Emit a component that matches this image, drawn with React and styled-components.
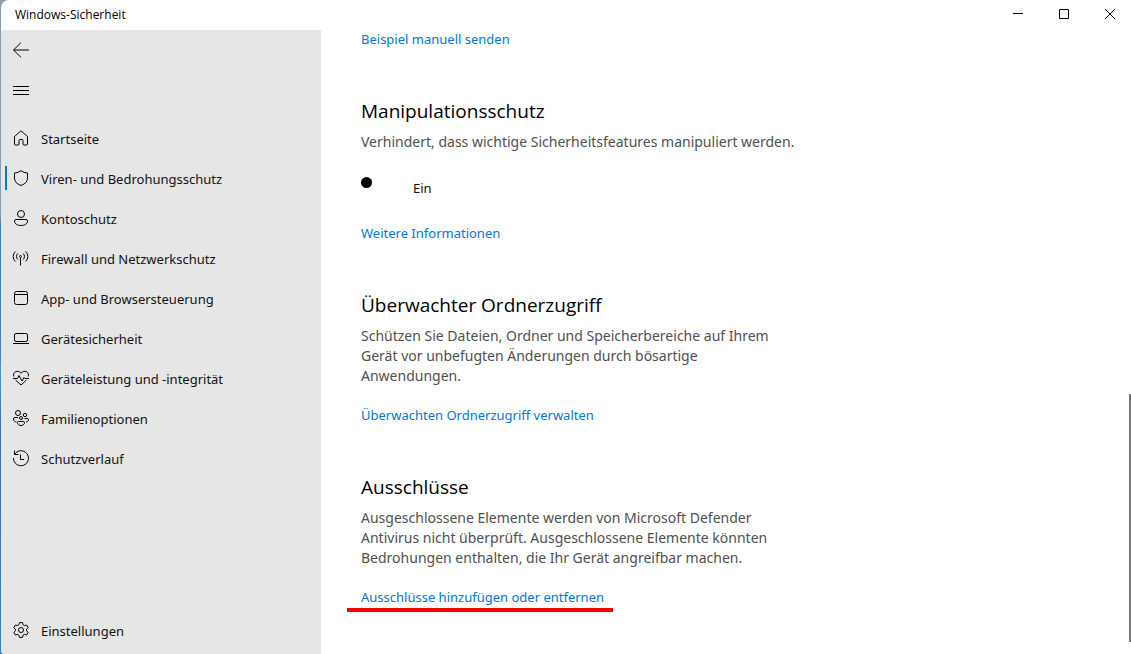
import React from "react";
import styled, { createGlobalStyle } from "styled-components";

const GlobalStyle = createGlobalStyle`
  *, *::before, *::after { box-sizing: border-box; }
  body {
    margin: 0;
    background: #ffffff;
    color: #111111;
    font-family: "Segoe UI", "Noto Sans", "Open Sans", sans-serif;
    font-size: 13px;
    line-height: 20px;
  }
  h2, p, ul { margin: 0; padding: 0; }
`;

const Desktop = styled.div`
  min-height: 100vh;
  padding-left: 1px;
  display: flex;
  background: linear-gradient(#8a9bae 0, #8a9bae 215px, #3f7fb4 225px, #4a80bb 360px, #4a9cc0 365px, #3f6cae 430px, #3f7fb4 100%);
`;

const Window = styled.div`
  flex: 1;
  min-width: 0;
  display: flex;
  flex-direction: column;
  overflow: hidden;
  background: #ffffff;
  border-radius: 8px 0 0 4px;
`;

const TitleBar = styled.header`
  height: 30px;
  padding-left: 14px;
  display: flex;
  align-items: center;
  justify-content: space-between;
  color: #000000;
  font-family: "Segoe UI", "Open Sans", sans-serif;
  font-size: 12px;
`;

const Caption = styled.div`
  align-self: flex-start;
  margin-right: -2px;
  display: flex;
`;

const CaptionButton = styled.button`
  width: 46px;
  height: 28px;
  padding: 0;
  border: 0;
  display: grid;
  place-items: center;
  background: transparent;
  color: #000000;
`;

const Body = styled.div`
  flex: 1;
  display: flex;
`;

const Sidebar = styled.nav`
  flex: 0 0 320px;
  display: flex;
  flex-direction: column;
  background: #e6e6e6;
  padding-bottom: 3px;
`;

const PaneButton = styled.button`
  width: 40px;
  height: 40px;
  padding: 0;
  border: 0;
  display: grid;
  place-items: center;
  background: transparent;
  color: #000000;
`;

const NavList = styled.ul`
  flex: 1;
  margin-top: 9px;
  list-style: none;
  display: flex;
  flex-direction: column;
`;

const NavItem = styled.li`
  margin-top: ${(p) => (p.$last ? "auto" : "0")};
`;

const NavLink = styled.a`
  height: 40px;
  display: flex;
  align-items: center;
  color: #111111;
  text-decoration: none;

  &::before {
    content: "";
    width: 2px;
    height: 24px;
    margin: 0 0 2px 4px;
    background: ${(p) => (p.$active ? "#0078d4" : "transparent")};
  }

  svg { margin: 0 12px 2px 6px; }
`;

const Content = styled.main`
  flex: 1;
  min-width: 0;
  padding: 0 40px;
`;

const Section = styled.section`
  margin-top: 49px;
`;

const Title = styled.h2`
  color: #000000;
  font-family: "Segoe UI", "Open Sans", sans-serif;
  font-size: 19px;
  font-weight: 400;
  line-height: 28px;
`;

const Description = styled.p`
  max-width: ${(p) => (p.$wide ? "none" : "420px")};
  margin: 7px 0 20px;
  color: #505050;
  font-size: 14px;
`;

const TextLink = styled.a`
  display: table;
  color: #0078d4;
  line-height: 18px;
  text-decoration: none;
`;

const MarkedLink = styled.div`
  width: max-content;
  margin-left: -14px;
  padding: 0 9px 2px 14px;
  border-bottom: 4px solid #fe0000;
`;

const ToggleRow = styled.label`
  width: max-content;
  height: 32px;
  margin-bottom: 20px;
  display: flex;
  align-items: center;
  gap: 12px;
`;

const Toggle = styled.input`
  appearance: none;
  width: 40px;
  height: 22px;
  margin: 0;

  &::before {
    content: "";
    display: block;
    width: 11px;
    height: 11px;
    border-radius: 50%;
    background: #000000;
  }
`;

const ScrollTrack = styled.div`
  flex: 0 0 2px;
  display: flex;
  flex-direction: column;
  justify-content: flex-end;
  padding-bottom: 12px;
`;

const ScrollThumb = styled.div`
  height: 248px;
  background: #767676;
`;

const icons = {
  back: <path d="M.5 8H16M8 .7 .5 8 8 15.300" />,
  menu: <path d="M0 4.500h16M0 8.500h16M0 12.500h16" />,
  home: <path d="M1.500 6.500 8 .8l6.500 5.700V14q0 1-1 1H11q-1 0-1-1V10.500q0-1-1-1H7q-1 0-1 1V14q0 1-1 1H2.500q-1 0-1-1Z" />,
  shield: <path d="M8 .6Q11 3 14.500 3v5q0 5.200-6.500 7.500Q1.500 13.200 1.500 8V3Q5 3 8 .6Z" />,
  account: (
    <>
      <circle cx="8" cy="4" r="3.500" />
      <path d="M3 9.500h10q1.500 0 1.500 1.500c0 3-3 4.500-6.500 4.500S1.500 14 1.500 11Q1.500 9.500 3 9.500Z" />
    </>
  ),
  network: (
    <>
      <circle cx="7.500" cy="6.500" r="1" />
      <path d="M7.500 7.500v8M4.800 9.500a4.200 4.200 0 0 1 0-6M10.200 9.500a4.200 4.200 0 0 0 0-6M2.300 11.500a7 7 0 0 1 0-10M12.700 11.500a7 7 0 0 0 0-10" />
    </>
  ),
  browser: (
    <>
      <rect x="1.500" y="1.500" width="13" height="13" rx="2" />
      <path d="M1.500 4.500h13" />
    </>
  ),
  laptop: (
    <>
      <rect x="1.500" y="3.500" width="13" height="8" rx="1.500" />
      <path d="M0 13.500h16" />
    </>
  ),
  heart: (
    <path d="M.8 6.500C-.8 2 4.800-.8 8 3.200 11.200-.8 16.800 2 15.200 6.500M0 8.500h4.500l1.500-3 3 5.500 2-3.500.8 1H16M2.500 10 8 15l5.500-5" />
  ),
  family: (
    <>
      <circle cx="5" cy="3" r="2.500" />
      <circle cx="12" cy="5" r="1.700" />
      <circle cx="8" cy="8" r="1.500" />
      <path d="M5 7.500H2Q.5 7.500.5 9c0 2 1.500 3 3 3M11.500 8.500H14q1.500 0 1.500 1c0 1.600-1.300 2.500-2.500 2.500M5.500 11.500h5q1 0 1 1c0 2-1.700 3-3.500 3s-3.500-1-3.500-3q0-1 1-1Z" />
    </>
  ),
  history: <path d="M1.500.5V4.500h4M1.500 4.500A7.500 7.500 0 1 1 .5 8M7.500 4.500v5H11" />,
  gear: (
    <>
      <circle cx="8" cy="8" r="2.500" />
      <path d="M6.500.6h3l.6 2.200 1.300.8 2.200-.6 1.600 2.700L13.500 7.200v1.600l1.700 1.500-1.600 2.700-2.200-.6-1.300.8-.6 2.200h-3l-.6-2.200-1.300-.8-2.200.6L.8 10.300l1.700-1.500V7.200L.8 5.700 2.400 3l2.200.6 1.300-.8Z" />
    </>
  ),
};

function Icon({ name }) {
  return (
    <svg width="16" height="16" viewBox="0 0 16 16" fill="none" stroke="#000" strokeLinejoin="round" overflow="visible" aria-hidden="true">
      {icons[name]}
    </svg>
  );
}

function CaptionIcon({ d }) {
  return (
    <svg width="10" height="10" viewBox="0 0 10 10" fill="none" stroke="#000" overflow="visible" aria-hidden="true">
      <path d={d} />
    </svg>
  );
}

const navigation = [
  ["home", "Startseite"],
  ["shield", "Viren- und Bedrohungsschutz"],
  ["account", "Kontoschutz"],
  ["network", "Firewall und Netzwerkschutz"],
  ["browser", "App- und Browsersteuerung"],
  ["laptop", "Gerätesicherheit"],
  ["heart", "Geräteleistung und -integrität"],
  ["family", "Familienoptionen"],
  ["history", "Schutzverlauf"],
  ["gear", "Einstellungen"],
];

export default function App() {
  return (
    <Desktop>
      <GlobalStyle />
      <Window>
        <TitleBar>
          <span>Windows-Sicherheit</span>
          <Caption>
            <CaptionButton aria-label="Minimieren"><CaptionIcon d="M0 4.500h10" /></CaptionButton>
            <CaptionButton aria-label="Maximieren"><CaptionIcon d="M.5 .5h9v9h-9Z" /></CaptionButton>
            <CaptionButton aria-label="Schließen"><CaptionIcon d="M0 0 10 10M10 0 0 10" /></CaptionButton>
          </Caption>
        </TitleBar>
        <Body>
          <Sidebar>
            <PaneButton aria-label="Zurück"><Icon name="back" /></PaneButton>
            <PaneButton aria-label="Navigation"><Icon name="menu" /></PaneButton>
            <NavList>
              {navigation.map(([icon, label]) => (
                <NavItem key={icon} $last={icon === "gear"}>
                  <NavLink href="#" $active={icon === "shield"}>
                    <Icon name={icon} />
                    {label}
                  </NavLink>
                </NavItem>
              ))}
            </NavList>
          </Sidebar>
          <Content>
            <TextLink href="#">Beispiel manuell senden</TextLink>
            <Section>
              <Title>Manipulationsschutz</Title>
              <Description $wide>Verhindert, dass wichtige Sicherheitsfeatures manipuliert werden.</Description>
              <ToggleRow>
                <Toggle type="checkbox" defaultChecked />
                Ein
              </ToggleRow>
              <TextLink href="#">Weitere Informationen</TextLink>
            </Section>
            <Section>
              <Title>Überwachter Ordnerzugriff</Title>
              <Description>
                Schützen Sie Dateien, Ordner und Speicherbereiche auf Ihrem Gerät vor unbefugten Änderungen durch bösartige Anwendungen.
              </Description>
              <TextLink href="#">Überwachten Ordnerzugriff verwalten</TextLink>
            </Section>
            <Section>
              <Title>Ausschlüsse</Title>
              <Description>
                Ausgeschlossene Elemente werden von Microsoft Defender Antivirus nicht überprüft. Ausgeschlossene Elemente könnten Bedrohungen enthalten, die Ihr Gerät angreifbar machen.
              </Description>
              <MarkedLink>
                <TextLink href="#">Ausschlüsse hinzufügen oder entfernen</TextLink>
              </MarkedLink>
            </Section>
          </Content>
          <ScrollTrack>
            <ScrollThumb />
          </ScrollTrack>
        </Body>
      </Window>
    </Desktop>
  );
}
